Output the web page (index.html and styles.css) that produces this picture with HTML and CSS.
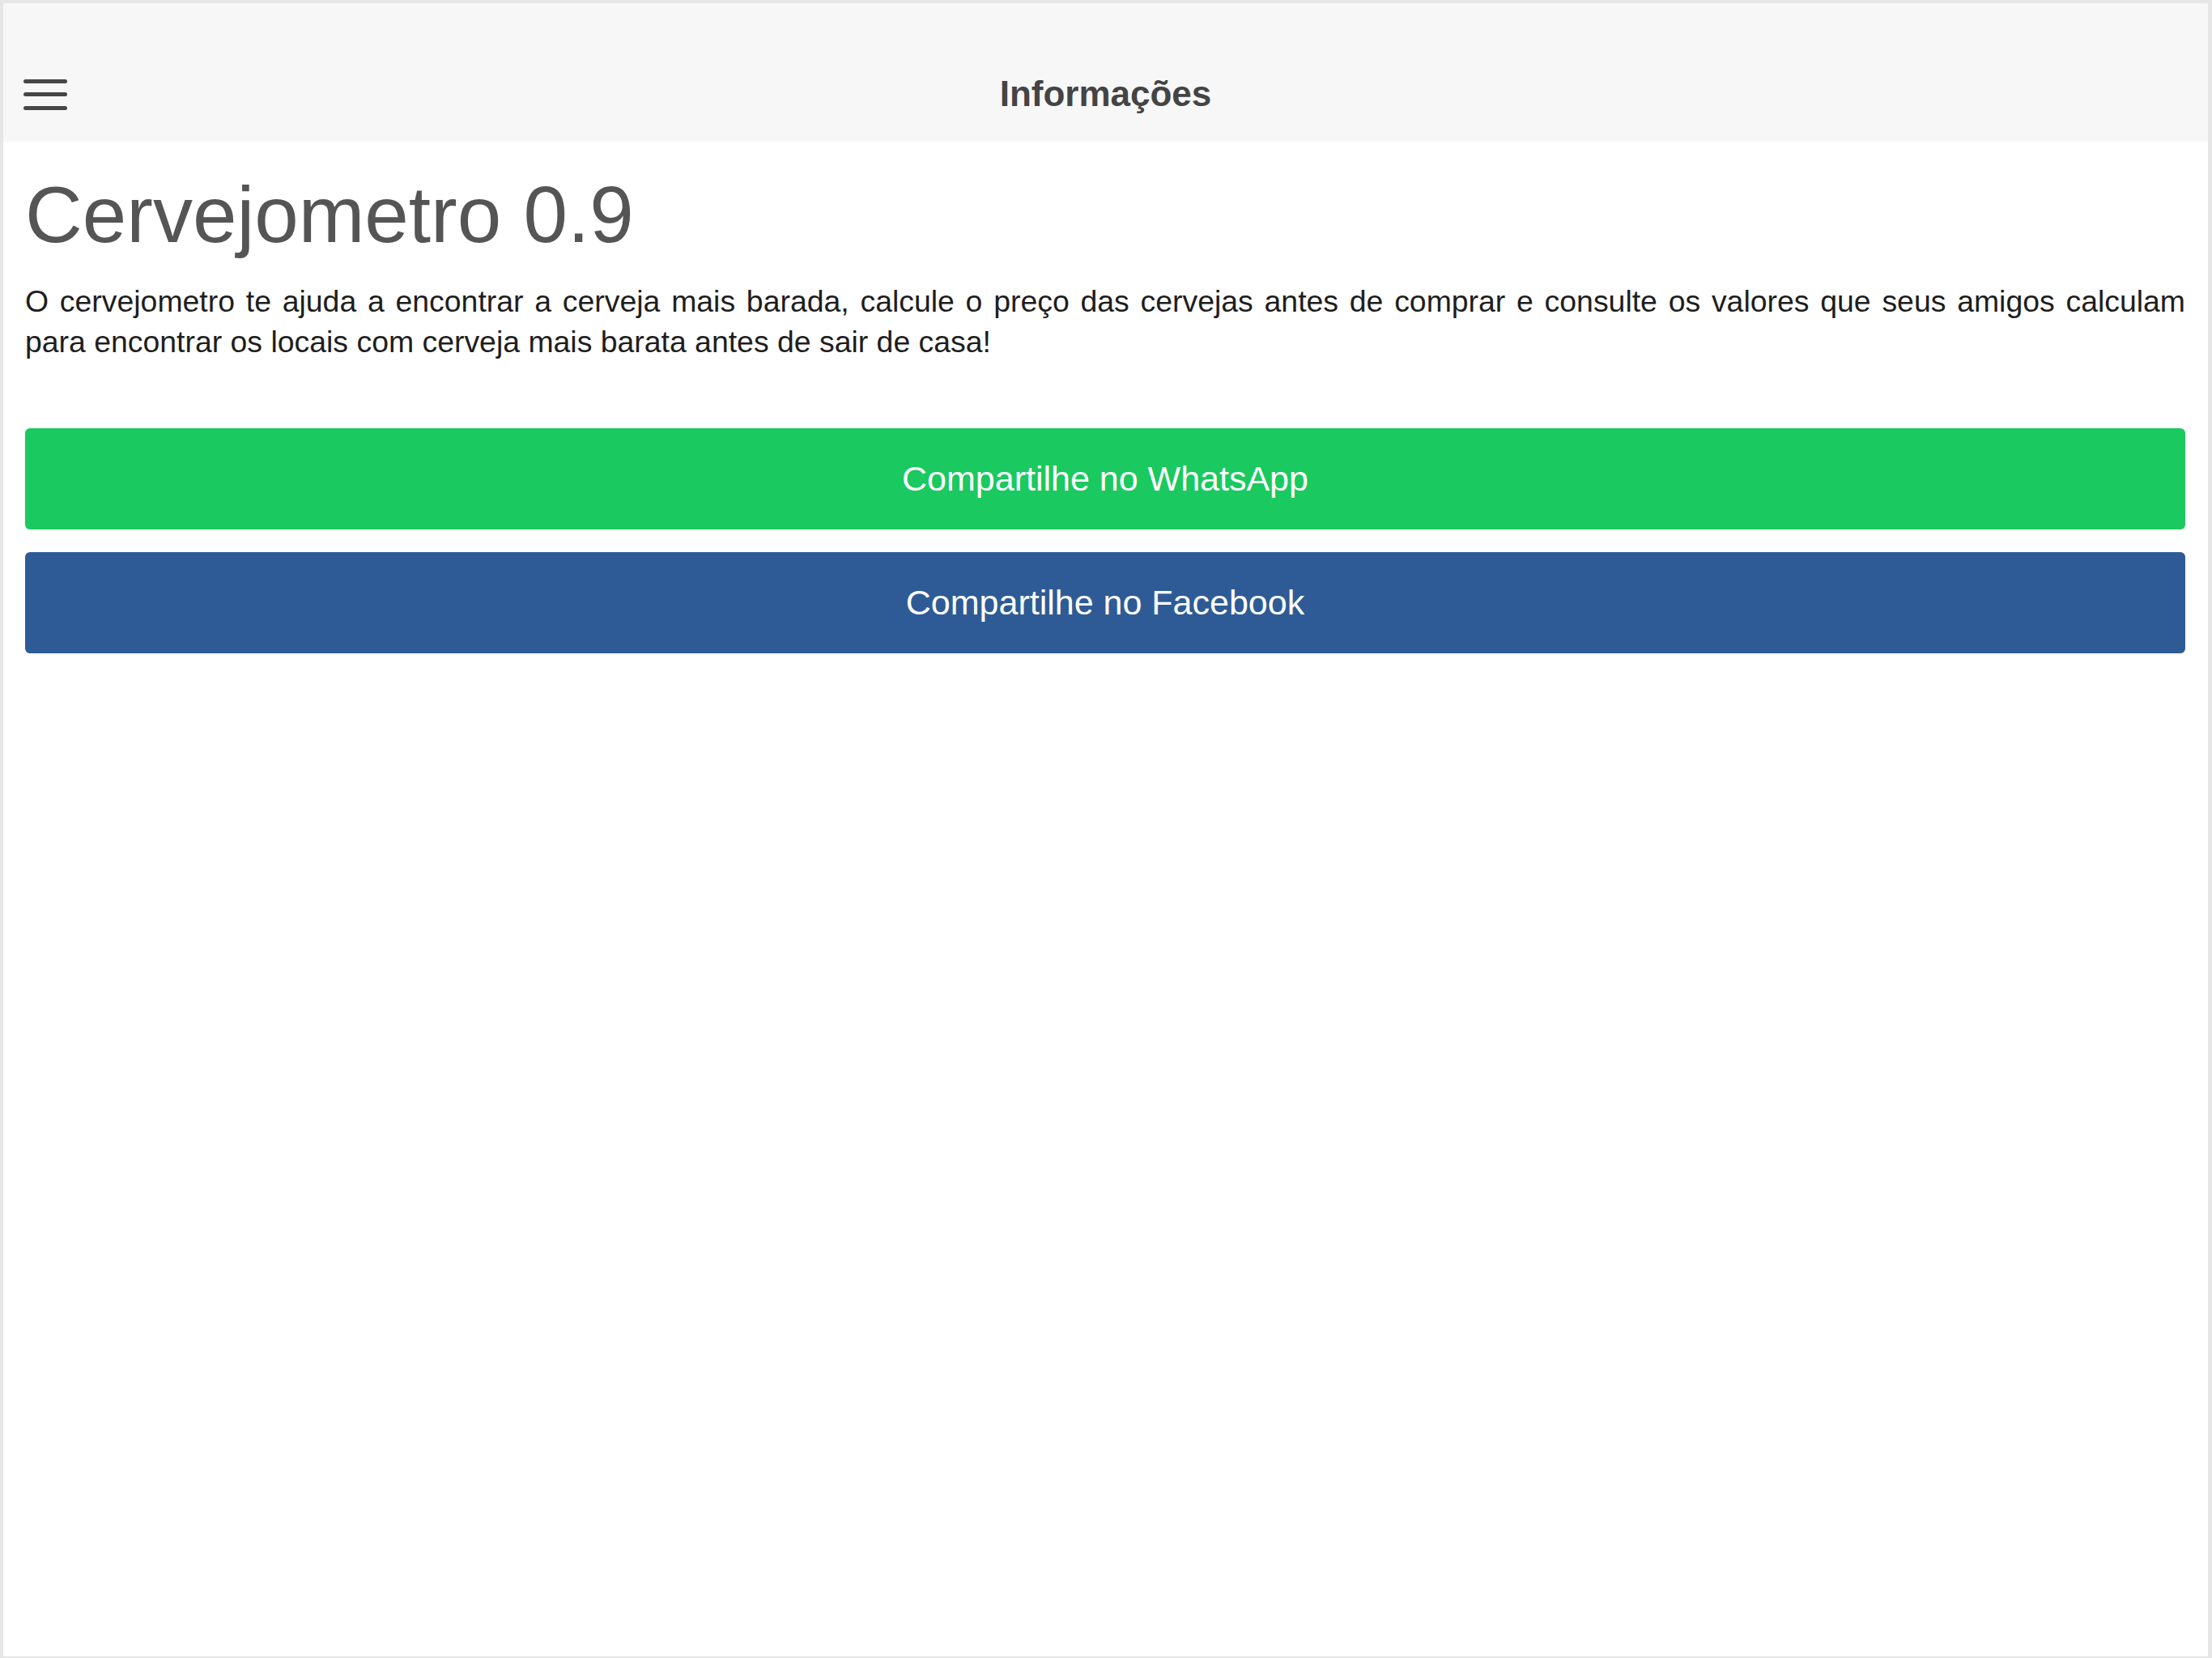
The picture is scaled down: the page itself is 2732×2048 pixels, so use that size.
FILE: index.html
```html
<!DOCTYPE html>
<html lang="pt">
<head>
<meta charset="utf-8">
<title>Informações</title>
<link rel="stylesheet" href="styles.css">
</head>
<body>
<div class="frame">
  <header class="header">
    <div class="navbar">
      <button class="menu-btn" aria-label="Menu">
        <svg width="54" height="40" viewBox="0 0 54 40">
          <rect x="0" y="0" width="54" height="5" rx="2.5" fill="#474747"/>
          <rect x="0" y="16" width="54" height="5" rx="2.5" fill="#474747"/>
          <rect x="0" y="33" width="54" height="5" rx="2.5" fill="#474747"/>
        </svg>
      </button>
      <div class="nav-title">Informações</div>
    </div>
  </header>
  <main class="content">
    <h1 class="title">Cervejometro 0.9</h1>
    <p class="intro">O cervejometro te ajuda a encontrar a cerveja mais barada, calcule o preço das cervejas antes de comprar e consulte os valores que seus amigos calculam para encontrar os locais com cerveja mais barata antes de sair de casa!</p>
    <div class="actions">
      <button class="share share-whatsapp">Compartilhe no WhatsApp</button>
      <button class="share share-facebook">Compartilhe no Facebook</button>
    </div>
  </main>
</div>
</body>
</html>
```

FILE: styles.css
```css
html, body {
  margin: 0;
  padding: 0;
  background: #ffffff;
}

body {
  font-family: "Liberation Sans", Arial, Helvetica, sans-serif;
}

.frame {
  box-sizing: border-box;
  width: 2732px;
  height: 2048px;
  border-style: solid;
  border-color: #e6e6e6;
  border-width: 4px 5px 2px 4px;
  background: #ffffff;
  display: flex;
  flex-direction: column;
}

.header {
  background: #f7f7f7;
  padding-top: 53px;
}

.navbar {
  height: 118px;
  display: flex;
  align-items: center;
  position: relative;
  padding-left: 25px;
}

.menu-btn {
  border: 0;
  background: transparent;
  padding: 0;
  margin: 0;
  width: 54px;
  height: 40px;
  display: flex;
  margin-top: 3px;
}

.nav-title {
  position: absolute;
  left: 0;
  right: 0;
  top: 0;
  bottom: 0;
  display: flex;
  align-items: center;
  justify-content: center;
  font-size: 44px;
  font-weight: 700;
  color: #444444;
  pointer-events: none;
}

.content {
  padding: 0 28px 0 27px;
}

.title {
  margin: 41px 0 0 0;
  font-size: 98px;
  line-height: 98px;
  font-weight: 400;
  color: #555555;
}

.intro {
  margin: 33px 0 0 0;
  font-size: 37.4px;
  line-height: 50px;
  color: #1e1e1e;
  text-align: justify;
}

.actions {
  margin-top: 82px;
  display: flex;
  flex-direction: column;
  gap: 28px;
}

.share {
  display: block;
  width: 100%;
  height: 125px;
  border: 0;
  border-radius: 6px;
  font-family: "Liberation Sans", Arial, Helvetica, sans-serif;
  font-size: 43px;
  color: #ffffff;
  text-align: center;
  padding: 0;
}

.share-whatsapp {
  background: #1ac95f;
}

.share-facebook {
  background: #2e5b96;
}
```
